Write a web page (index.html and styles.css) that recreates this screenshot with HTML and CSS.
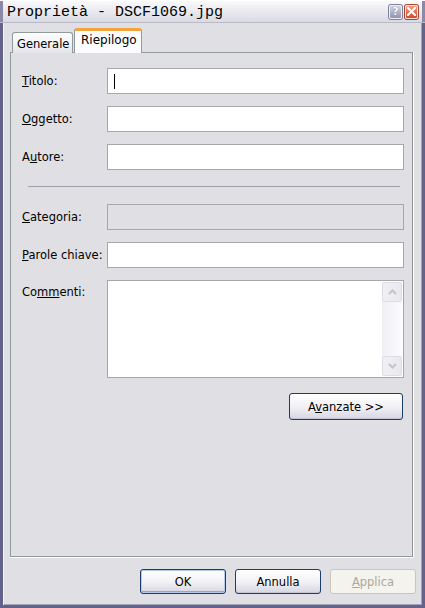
FILE: index.html
```html
<!DOCTYPE html>
<html lang="it">
<head>
    <meta charset="UTF-8">
    <title>Proprietà - DSCF1069.jpg</title>
    <link rel="stylesheet" href="styles.css">
</head>
<body>
    <div class="window">
        <!-- Title bar -->
        <div class="titlebar">
            <span class="title">Proprietà - DSCF1069.jpg</span>
            <div class="title-buttons">
                <span class="tbtn help">?</span>
                <span class="tbtn close">
                    <svg width="9" height="9" viewBox="0 0 9 9"><path d="M1 1 L8 8 M8 1 L1 8" stroke="#fff" stroke-width="2" stroke-linecap="square"/></svg>
                </span>
            </div>
        </div>

        <div class="client">
            <!-- Tabs -->
            <div class="tabs">
                <div class="tab">Generale</div>
                <div class="tab active">Riepilogo</div>
            </div>

            <div class="panel">
                <div class="row">
                    <span class="label"><u>T</u>itolo:</span>
                    <div class="field"><span class="caret"></span></div>
                </div>
                <div class="row">
                    <span class="label"><u>O</u>ggetto:</span>
                    <div class="field"></div>
                </div>
                <div class="row">
                    <span class="label">A<u>u</u>tore:</span>
                    <div class="field"></div>
                </div>

                <div class="separator"></div>

                <div class="row">
                    <span class="label"><u>C</u>ategoria:</span>
                    <div class="field disabled"></div>
                </div>
                <div class="row">
                    <span class="label"><u>P</u>arole chiave:</span>
                    <div class="field"></div>
                </div>
                <div class="row row-memo">
                    <span class="label">Co<u>mm</u>enti:</span>
                    <div class="field memo">
                        <div class="scrollbar">
                            <span class="sbtn">
                                <svg width="9" height="6" viewBox="0 0 9 6"><path d="M1 5 L4.5 1.5 L8 5" fill="none" stroke="#c3c3cc" stroke-width="2"/></svg>
                            </span>
                            <span class="track"></span>
                            <span class="sbtn">
                                <svg width="9" height="6" viewBox="0 0 9 6"><path d="M1 1 L4.5 4.5 L8 1" fill="none" stroke="#c3c3cc" stroke-width="2"/></svg>
                            </span>
                        </div>
                    </div>
                </div>

                <div class="advanced">
                    <button class="btn wide">A<u>v</u>anzate &gt;&gt;</button>
                </div>
            </div>

            <!-- Dialog buttons -->
            <div class="dialog-buttons">
                <button class="btn default">OK</button>
                <button class="btn">Annulla</button>
                <button class="btn" disabled><u>A</u>pplica</button>
            </div>
        </div>
    </div>
</body>
</html>
```

FILE: styles.css
```css
body {
    margin: 0;
    padding: 0;
    background: #e0dfe3;
    font-family: "DejaVu Sans", Verdana, sans-serif;
    font-size: 11.5px;
    color: #000;
}
.window {
    width: 425px;
    height: 608px;
    box-sizing: border-box;
    border: 3px solid #62628a;
    border-top: none;
    box-shadow: inset 1px 0 0 #f4f4f8, inset -1px -1px 0 #a4a4b8;
    display: flex;
    flex-direction: column;
    background: #e0dfe3;
}

/* Title bar */
.titlebar {
    height: 23px;
    margin: 0 -3px;
    padding: 0 7px 0 7px;
    display: flex;
    align-items: center;
    justify-content: space-between;
    background: linear-gradient(#fafafd, #ececf1 40%, #dadae3);
    border-top: 1px solid #ffffff;
    border-bottom: 1px solid #b9b9c8;
    box-sizing: border-box;
    box-shadow: inset 3px 0 0 #8a8aa8, inset -3px 0 0 #8a8aa8;
}
.title {
    font-family: "Liberation Mono", "Courier New", monospace;
    font-size: 15px;
    color: #000;
    padding-top: 1px;
}
.title-buttons {
    display: flex;
    gap: 1px;
}
.tbtn {
    width: 13px;
    height: 14px;
    border-radius: 2px;
    box-sizing: border-box;
    display: flex;
    align-items: center;
    justify-content: center;
}
.help {
    background: linear-gradient(#d4d6e2, #8f94b2);
    border: 1px solid #eeeef4;
    box-shadow: 0 0 0 1px #80839e;
    color: #fff;
    font-weight: bold;
    font-size: 11px;
    font-family: "DejaVu Sans", sans-serif;
    text-shadow: 0 0 1px #4a4e6e;
}
.close {
    background: linear-gradient(#f19c86, #d24a28);
    border: 1px solid #fbe3dc;
    box-shadow: 0 0 0 1px #a8442f;
    margin-left: 2px;
}

/* Client area */
.client {
    flex: 1;
    display: flex;
    flex-direction: column;
    padding: 6px 6px 0 7px;
}
.tabs {
    display: flex;
    align-items: flex-end;
    height: 24px;
    padding-left: 2px;
    position: relative;
    z-index: 1;
    margin-bottom: -1px;
}
.tab {
    height: 21px;
    box-sizing: border-box;
    width: 61px;
    border: 1px solid #919b9c;
    border-bottom: none;
    border-radius: 3px 3px 0 0;
    background: linear-gradient(#fefefe, #f0f0f4 60%, #e4e4ea);
    padding: 4px 0 0 4px;
}
.tab.active {
    height: 25px;
    width: 68px;
    margin-left: 1px;
    background: #fcfcfe;
    border-top: 3px solid #f4a43c;
    border-radius: 3px 3px 0 0;
    padding: 2px 0 0 6px;
    font-size: 12px;
}
.panel {
    height: 505px;
    box-sizing: border-box;
    margin-right: 3px;
    border: 1px solid #919b9c;
    border-right-color: #8d9394;
    box-shadow: 1px 0 0 #ffffff, 0 1px 0 #ffffff;
    padding: 15px 8px 0 11px;
    display: flex;
    flex-direction: column;
}
.row {
    display: flex;
    align-items: center;
    margin-bottom: 12px;
}
.label {
    width: 85px;
    flex-shrink: 0;
}
.field {
    flex: 1;
    height: 26px;
    box-sizing: border-box;
    border: 1px solid #a5a7ab;
    background: #fff;
    display: flex;
    align-items: center;
    padding-left: 6px;
}
.field.disabled {
    background: #e0dfe3;
}
.caret {
    width: 1px;
    height: 15px;
    background: #000;
}
.separator {
    height: 1px;
    background: #a0a0a8;
    margin: 4px 4px 17px 6px;
}
.row-memo {
    align-items: flex-start;
}
.row-memo .label {
    padding-top: 5px;
}
.field.memo {
    height: 98px;
    padding: 1px;
    justify-content: flex-end;
    align-items: stretch;
}
.scrollbar {
    width: 20px;
    display: flex;
    flex-direction: column;
    background: linear-gradient(90deg, #f0f0f4, #fbfbfd);
}
.sbtn {
    height: 20px;
    box-sizing: border-box;
    border: 1px solid #dedee6;
    border-radius: 2px;
    background: linear-gradient(90deg, #f0f0f4, #e8e8ee);
    display: flex;
    align-items: center;
    justify-content: center;
}
.track {
    flex: 1;
}
.advanced {
    display: flex;
    justify-content: flex-end;
    margin-top: 3px;
    padding-right: 1px;
}

/* Buttons */
.btn {
    font-family: "DejaVu Sans", Verdana, sans-serif;
    font-size: 11.5px;
    color: #000;
    width: 86px;
    height: 25px;
    border: 1px solid #1c3d6c;
    border-radius: 3px;
    background: linear-gradient(#ffffff, #f2f2f6 50%, #d6d6e2);
    box-shadow: inset 0 -1px 0 #c4c4d4;
    padding: 0;
}
.btn.wide {
    width: 114px;
    height: 27px;
}
.btn.default {
    box-shadow: inset 0 0 0 1px #b5c9ec, inset 0 -2px 0 #8ca7e0;
}
.btn:disabled {
    color: #aca899;
    border-color: #c9c7ba;
    background: #f4f3ee;
    box-shadow: none;
}
.dialog-buttons {
    display: flex;
    justify-content: flex-end;
    gap: 9px;
    margin-top: 12px;
}
```
